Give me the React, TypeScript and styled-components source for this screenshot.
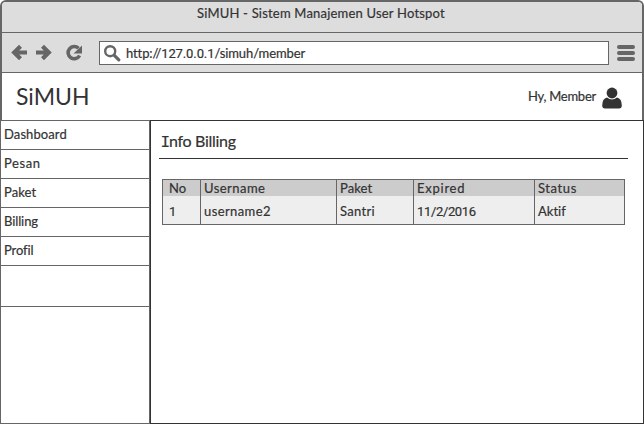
import React from "react";
import styled, { createGlobalStyle } from "styled-components";

const Global = createGlobalStyle`
  * { box-sizing: border-box; }
  body { margin: 0; background: #fff; color: #333; overflow: hidden;
    font-family: Lato, "Noto Sans", sans-serif; font-size: 13px; line-height: 16px; font-weight: 400;
    font-variant-ligatures: none; }
`;
const Text = styled.span<{ $size?: number; $track?: number }>`
  display: block;
  white-space: nowrap;
  font-size: ${(p) => p.$size ?? 13}px;
  letter-spacing: ${(p) => p.$track ?? 0}px;
  -webkit-text-stroke: ${(p) => ((p.$size ?? 13) > 20 ? 0 : 0.2)}px #333;
`;
const Digits = styled.span` font-family: Roboto, sans-serif; `;
const SlabInitial = styled.span`
  font-family: "Liberation Mono", monospace; display: inline-block; width: 7px; text-indent: -1.5px;
`;
const Browser = styled.div`
  width: 644px; height: 424px; display: flex; flex-direction: column; background: #fff;
`;
const Chrome = styled.div`
  height: 120px; border: 2px solid #666; border-bottom: 0; border-radius: 6px 6px 0 0; overflow: hidden;
`;
const TitleBar = styled.div`
  height: 31px; background: #ddd; border-bottom: 1px solid #666;
  display: flex; padding: 3px 0 0 195px;
`;
const Toolbar = styled.div`
  height: 40px; background: #ddd; border-bottom: 1px solid #666;
  display: flex; align-items: flex-start; padding: 8px 0 0 9px;
`;
const NavIcons = styled.svg` width: 88px; height: 24px; display: block; `;
const Address = styled.div`
  width: 510px; height: 24px; background: #fff; border: 1px solid #666;
  display: flex; align-items: center; gap: 5px; padding-left: 4px;
`;
const SearchIcon = styled.svg` width: 17px; height: 17px; display: block; `;
const Menu = styled.svg` width: 18px; height: 18px; margin: 3px 0 0 8px; display: block; `;
const Header = styled.header`
  height: 47px; display: flex; align-items: center; justify-content: space-between; padding: 0 20px 0 14px;
`;
const Brand = styled(Text)` padding-bottom: 2px; `;
const User = styled.div` display: flex; align-items: center; gap: 6px; padding-top: 2px; `;
const UserName = styled(Text)` padding-bottom: 3px; `;
const UserIcon = styled.svg` width: 20px; height: 22px; display: block; `;
const Body = styled.div` display: flex; height: 304px; `;
const Sidebar = styled.nav` width: 150px; border: 1px solid #666; `;
const Item = styled.div<{ $tall?: boolean }>`
  height: ${(p) => (p.$tall ? 41 : 29)}px; border-bottom: 1px solid #666; padding: 5px 0 0 3px;
`;
const Main = styled.main` width: 494px; border: 1px solid #333; padding: 0 0 0 8px; `;
const Heading = styled.div`
  width: 469px; height: 38px; border-bottom: 1px solid #333; padding: 12px 0 0 3px; margin-bottom: 20px;
`;
const Table = styled.div`
  width: 463px; height: 46px; margin-left: 3px; border: 1px solid #666;
  display: grid; grid-template-columns: 38px 136px 77px 121px 89px;
`;
const Column = styled.div<{ $first?: boolean }>`
  border-right: 1px solid #666; background: #eee;
  &:last-child { border-right: 0; }
  > div { padding-left: ${(p) => (p.$first ? 6 : 3)}px; }
`;
const Head = styled.div` height: 16px; background: #ccc; `;
const Cell = styled.div` height: 28px; padding-top: 7px; `;

const items: [string, number][] = [["Dashboard", 0.1], ["Pesan", 0.6], ["Paket", 0.1], ["Billing", -0.1], ["Profil", -0.1]];
const columns: [string, number, React.ReactNode, number][] = [
  ["No", 0, <Digits>1</Digits>, 0],
  ["Username", 0.45, "username2", 0.4],
  ["Paket", 0.1, "Santri", 0.3],
  ["Expired", 0.75, <Digits>11/2/2016</Digits>, -0.35],
  ["Status", 0.6, "Aktif", 0],
];

export default function App() {
  return (
    <Browser>
      <Global />
      <Chrome>
        <TitleBar><Text $track={0.2}>SiMUH - Sistem Manajemen User Hotspot</Text></TitleBar>
        <Toolbar>
          <NavIcons viewBox="11 41 88 24" fill="none" stroke="#666" strokeWidth="4.2">
            <path d="M27 52.5H14M20.5 46.200l-6.300 6.300 6.300 6.300" />
            <path d="M36 52.5h13M42.500 46.200l6.300 6.300-6.300 6.300" />
            <path d="M78.500 48.300A6.100 6.100 0 1 0 79.600 55.500" strokeWidth="3.600" />
            <path d="M82 45.500v8h-8.500z" fill="#666" stroke="none" />
          </NavIcons>
          <Address>
            <SearchIcon viewBox="0 0 17 17" fill="none" stroke="#666">
              <circle cx="6.200" cy="6.200" r="5" strokeWidth="2.400" />
              <path d="m10.300 10.300 4.500 4.500" strokeWidth="3.200" strokeLinecap="round" />
            </SearchIcon>
            <Text $track={-0.1}>http://<Digits>127.0.0.1</Digits>/simuh/member</Text>
          </Address>
          <Menu viewBox="0 0 18 18" fill="#666">
            <rect width="18" height="4" y="1" rx="2" /><rect width="18" height="4" y="7" rx="2" /><rect width="18" height="4" y="13" rx="2" />
          </Menu>
        </Toolbar>
        <Header>
          <Brand $size={23}>SiMUH</Brand>
          <User>
            <UserName $track={-0.25}>Hy, Member</UserName>
            <UserIcon viewBox="0 0 20 22" fill="#333">
              <circle cx="10" cy="6" r="5.400" />
              <path d="M5 10.500Q10 14.500 15 10.500Q19.800 11.500 19.800 18.500Q19.800 21.500 17 21.500H3Q.2 21.500 .2 18.500Q.2 11.500 5 10.500Z" />
            </UserIcon>
          </User>
        </Header>
      </Chrome>
      <Body>
        <Sidebar>
          {items.map(([name, track]) => <Item key={name}><Text $track={track}>{name}</Text></Item>)}
          <Item $tall />
        </Sidebar>
        <Main>
          <Heading><Text $size={16} $track={-0.3}><SlabInitial>I</SlabInitial>nfo Billing</Text></Heading>
          <Table>
            {columns.map(([name, nt, value, vt], i) => (
              <Column key={name} $first={i === 0}>
                <Head><Text $track={nt}>{name}</Text></Head>
                <Cell><Text $track={vt}>{value}</Text></Cell>
              </Column>
            ))}
          </Table>
        </Main>
      </Body>
    </Browser>
  );
}
